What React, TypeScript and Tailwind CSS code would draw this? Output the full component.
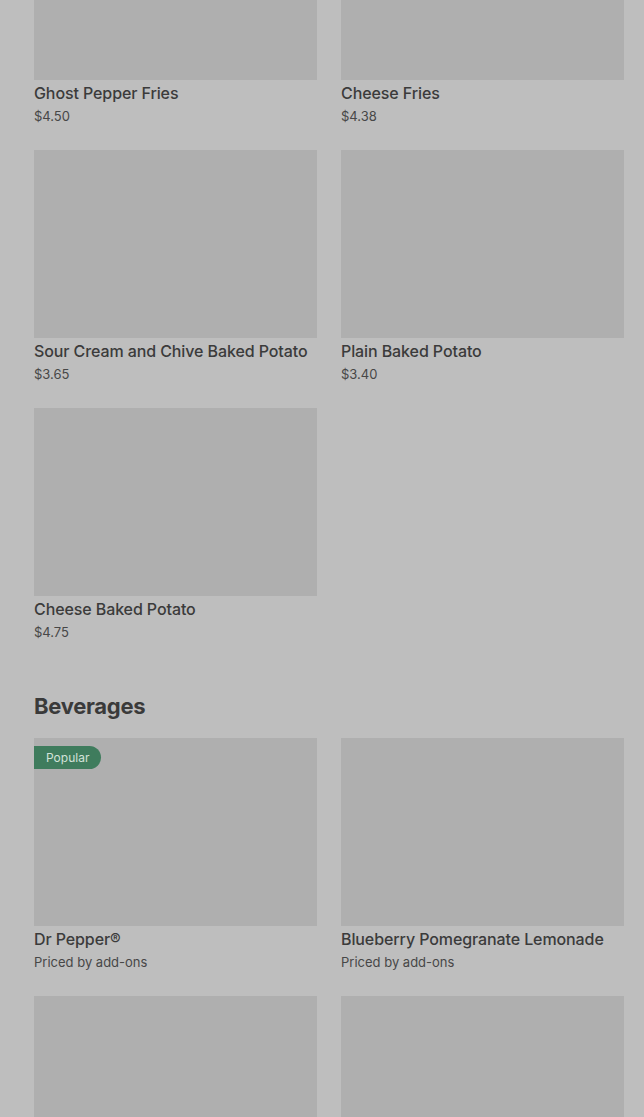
import React from 'react';

interface Item {
  name?: string;
  price?: string;
  popular?: boolean;
}

const sides: Item[] = [
  { name: 'Ghost Pepper Fries', price: '$4.50' },
  { name: 'Cheese Fries', price: '$4.38' },
  { name: 'Sour Cream and Chive Baked Potato', price: '$3.65' },
  { name: 'Plain Baked Potato', price: '$3.40' },
  { name: 'Cheese Baked Potato', price: '$4.75' },
];

// the last row is scrolled past the bottom, only the images show
const beverages: Item[] = [
  { name: 'Dr Pepper®', price: 'Priced by add-ons', popular: true },
  { name: 'Blueberry Pomegranate Lemonade', price: 'Priced by add-ons' },
  {},
  {},
];

const ItemCard: React.FC<{ item: Item }> = ({ item }) => (
  <div className="flex flex-col">
    <div className="relative h-[188px] bg-[#afafaf]">
      {item.popular && (
        <span className="absolute left-0 top-[8px] h-[23px] w-[67px] rounded-r-full bg-[#3f7c5d] pl-[12px] text-[12px] leading-[23px] text-[#d3e2d9]">
          Popular
        </span>
      )}
    </div>
    {item.name && (
      <>
        <div className="mt-[2px] text-[16px] font-medium leading-[22px] tracking-[-0.1px] text-[#3b3b3b] whitespace-nowrap">
          {item.name}
        </div>
        <div className="mt-[2px] text-[13px] leading-[20px] text-[#474747]">{item.price}</div>
      </>
    )}
  </div>
);

export default function App() {
  return (
    <div
      className="h-[1117px] overflow-hidden bg-[#bebebe]"
      style={{ fontFamily: 'Inter, "Noto Sans", sans-serif' }}
    >
      <div className="-mt-[108px] pl-[34px] pr-[20px]">
        <div className="grid grid-cols-2 gap-x-[24px] gap-y-[24px]">
          {sides.map((it, i) => (
            <ItemCard key={i} item={it} />
          ))}
        </div>
        <h2 className="mt-[48px] text-[22px] font-bold leading-[32px] tracking-[-0.3px] text-[#3a3a3a]">
          Beverages
        </h2>
        <div className="mt-[16px] grid grid-cols-2 gap-x-[24px] gap-y-[24px]">
          {beverages.map((it, i) => (
            <ItemCard key={i} item={it} />
          ))}
        </div>
      </div>
    </div>
  );
}
